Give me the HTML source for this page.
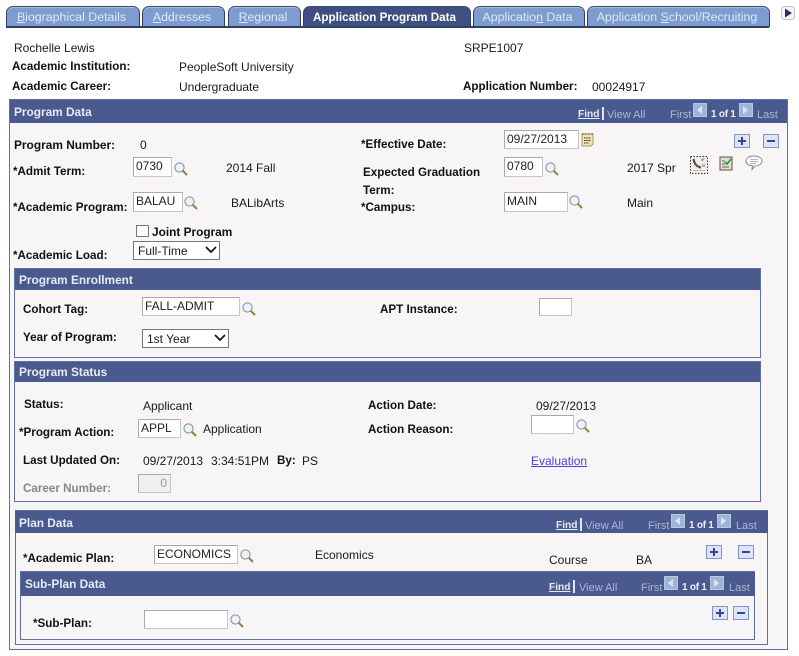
<!DOCTYPE html>
<html><head><meta charset="utf-8"><style>
html,body{margin:0;padding:0;background:#fff}
#p{position:relative;width:799px;height:656px;overflow:hidden;background:#fff;font:12px/14px "Liberation Sans",Arial,sans-serif;color:#1a1a1a;filter:blur(.3px)}
#p div,#p span.t,#p svg{position:absolute}
.t{white-space:nowrap}
.b{font-weight:bold;color:#111;font-size:11.65px;margin-top:1px}
.tab{top:6px;height:20px;background:#7d9dd0;border:1px solid #2f3f63;border-bottom:0;border-radius:7px 7px 0 0;border-top-color:#3a4a73;color:#dfe8f6;text-align:center;line-height:21px;box-shadow:inset 0 1px 0 #a9bfe2;white-space:nowrap;font-size:12.35px;text-indent:-3px}
.tab.a{background:#3f4f82;color:#fff;font-weight:bold;box-shadow:none;font-size:11.65px;text-indent:-5px}
.tab u{text-decoration-thickness:1px}
.box{border:1px solid #5f6ea3;box-sizing:border-box;background:#f7f5f5}
.hd{background:#4a5a8e;color:#e6ebf5;font-weight:bold}
.ht{color:#e6ebf5;font-weight:bold;font-size:11.85px}
.in{box-sizing:border-box;height:19px;background:#fff;border:1px solid #c9c6c2;border-top-color:#aaa;border-left-color:#aaa;line-height:14px;padding:1px 0 0 2px;color:#222;white-space:nowrap}
.sel{box-sizing:border-box;height:19px;background:#fff;border:1px solid #777;line-height:18px;padding-left:4px}
.nav{font-size:11px;color:#aab6d4}
.fd{font-size:10.2px;color:#e6ebf5;font-weight:bold}
.of{font-size:10px;color:#eef;font-weight:bold;letter-spacing:-.25px}
.pipe{width:2px;height:13px;background:#dfe5f2}
.nb{width:14px;height:14px;background:#9db5d8;border:1px solid #b4c6e0;box-sizing:border-box}
.nb:after{content:"";position:absolute;top:2px;border:4px solid transparent}
.nb.l:after{left:-1px;border-right:5px solid #dce6f3}
.nb.r:after{left:3px;border-left:5px solid #dce6f3}
.pm{width:16px;height:14px;box-sizing:border-box;background:#dde4f8;border:1px solid #7f92ca;color:#35468a}
.pm:before{content:"";position:absolute;left:3px;top:5px;width:8px;height:2px;background:#35468a}
.pm.p:after{content:"";position:absolute;left:6px;top:2px;width:2px;height:8px;background:#35468a}
</style></head><body><div id="p">
<svg width="0" height="0" style="position:absolute"><defs>
<symbol id="m" viewBox="0 0 14 14"><circle cx="5.5" cy="5.5" r="4.6" fill="#eaf2f8" stroke="#7f8f98" stroke-width="1"/><path d="M8.8 8.8L13 13" stroke="#8a8540" stroke-width="2"/></symbol>
</defs></svg>

<div class="tab" style="left:6px;width:132px"><u>B</u>iographical Details</div>
<div class="tab" style="left:142px;width:81px"><u>A</u>ddresses</div>
<div class="tab" style="left:228px;width:71px"><u>R</u>egional</div>
<div class="tab a" style="left:303px;width:166px">Application Program Data</div>
<div class="tab" style="left:473px;width:110px">Applicatio<u>n</u> Data</div>
<div class="tab" style="left:587px;width:181px">Application <u>S</u>chool/Recruiting</div>
<div style="left:6px;top:26px;width:763px;height:2px;background:#2f3f63"></div>
<svg style="left:781px;top:6px" width="15" height="15" viewBox="0 0 15 15"><rect x=".5" y=".5" width="13" height="13" rx="3" fill="#f4f5f8" stroke="#bfc4cf"/><path d="M4 2.500l7 4.500-7 4.500z" fill="#26324f"/></svg>

<span class="t" style="left:14px;top:41px">Rochelle Lewis</span>
<span class="t b" style="left:12px;top:59px">Academic Institution:</span>
<span class="t" style="left:179px;top:60px">PeopleSoft University</span>
<span class="t b" style="left:12px;top:79px">Academic Career:</span>
<span class="t" style="left:179px;top:80px">Undergraduate</span>
<span class="t" style="left:464px;top:41px">SRPE1007</span>
<span class="t b" style="left:463px;top:79px">Application Number:</span>
<span class="t" style="left:592px;top:80px">00024917</span>

<div class="box" style="left:9px;top:99px;width:779px;height:551px"></div>
<div class="hd" style="left:10px;top:100px;width:777px;height:23px"></div>
<span class="t ht" style="left:14px;top:105px">Program Data</span>
<span class="t fd" style="left:578px;top:108px"><u>Find</u></span>
<div class="pipe" style="left:602px;top:107px"></div>
<span class="t nav" style="left:607px;top:108px">View All</span>
<span class="t nav" style="left:670px;top:108px">First</span>
<div class="nb l" style="left:693px;top:103px"></div>
<span class="t of" style="left:711px;top:108px">1 of 1</span>
<div class="nb r" style="left:739px;top:103px"></div>
<span class="t nav" style="left:757px;top:108px">Last</span>

<span class="t b" style="left:14px;top:137px;font-size:11.9px">Program Number:</span>
<span class="t" style="left:140px;top:138px">0</span>
<span class="t b" style="left:13px;top:164px">*Admit Term:</span>
<div class="in" style="left:133px;top:157px;width:39px;height:20px">0730</div>
<svg style="left:174px;top:162px" width="14" height="14"><use href="#m"/></svg>
<span class="t" style="left:226px;top:161px">2014 Fall</span>
<span class="t b" style="left:13px;top:200px">*Academic Program:</span>
<div class="in" style="left:133px;top:192px;width:50px;height:20px">BALAU</div>
<svg style="left:184px;top:196px" width="14" height="14"><use href="#m"/></svg>
<span class="t" style="left:231px;top:196px">BALibArts</span>
<div style="left:136px;top:225px;width:13px;height:12px;box-sizing:border-box;border:1px solid #777;background:#fdfdfd"></div>
<span class="t b" style="left:152px;top:224px;font-size:11.85px">Joint Program</span>
<span class="t b" style="left:13px;top:248px">*Academic Load:</span>
<div class="sel" style="left:133px;top:241px;width:87px">Full-Time</div>
<svg style="left:205px;top:246px" width="12" height="9"><path d="M1 1l5 5 5-5" fill="none" stroke="#111" stroke-width="1.7"/></svg>

<span class="t b" style="left:361px;top:137px">*Effective Date:</span>
<div class="in" style="left:504px;top:130px;width:75px">09/27/2013</div>
<svg style="left:581px;top:132px" width="13" height="15" viewBox="0 0 13 15"><path d="M1 2h11v10l-2 2H1z" fill="#f1e4ad" stroke="#a89a63"/><path d="M2 1v2M5 1v2M8 1v2M11 1v2" stroke="#776"/><path d="M3 6h7M3 8.500h7M3 11h5" stroke="#333" stroke-dasharray="1.500 .7"/></svg>
<span class="t b" style="left:363px;top:165px">Expected Graduation</span>
<span class="t b" style="left:363px;top:183px">Term:</span>
<div class="in" style="left:504px;top:157px;width:39px;height:20px">0780</div>
<svg style="left:545px;top:162px" width="14" height="14"><use href="#m"/></svg>
<span class="t" style="left:627px;top:161px">2017 Spr</span>
<span class="t b" style="left:361px;top:200px">*Campus:</span>
<div class="in" style="left:504px;top:192px;width:64px;height:20px">MAIN</div>
<svg style="left:569px;top:195px" width="14" height="14"><use href="#m"/></svg>
<span class="t" style="left:627px;top:196px">Main</span>

<div class="pm p" style="left:734px;top:134px"></div>
<div class="pm" style="left:763px;top:134px"></div>
<svg style="left:690px;top:156px" width="18" height="18" viewBox="0 0 18 18"><rect x=".5" y=".5" width="17" height="17" fill="#f3efe6" stroke="#333" stroke-dasharray="1.500 1.500"/><path d="M3.500 3c1 5 3 7.500 7.500 8.500" fill="none" stroke="#555" stroke-width="2.200"/><path d="M11 3l4-1-3 4z" fill="#999"/><rect x="12" y="8" width="3" height="3" fill="#e9a0a0"/><path d="M3 14.500h12" stroke="#bbb"/></svg>
<svg style="left:719px;top:156px" width="14" height="15" viewBox="0 0 14 15"><rect x="1" y="1" width="12" height="13" fill="#e3dfc8" stroke="#55554a"/><path d="M3 5h3M3 8h3M3 11h7" stroke="#666"/><path d="M6 6l2 2 4-5" fill="none" stroke="#1f9a3c" stroke-width="1.600"/></svg>
<svg style="left:745px;top:155px" width="18" height="16" viewBox="0 0 18 16"><path d="M9 1c4.500 0 8 2 8 5s-3.500 5-7 5l-3 3.500.6-3.700C4 10.500 1 9 1 6c0-3 3.500-5 8-5z" fill="#fff" stroke="#888"/><path d="M5 4.500h8M5 6.500h8M5 8.500h6" stroke="#aab8dc"/></svg>

<div class="box" style="left:14px;top:268px;width:747px;height:90px"></div>
<div class="hd" style="left:15px;top:269px;width:745px;height:21px"></div>
<span class="t ht" style="left:19px;top:273px">Program Enrollment</span>
<span class="t b" style="left:23px;top:302px">Cohort Tag:</span>
<div class="in" style="left:142px;top:297px;width:98px">FALL-ADMIT</div>
<svg style="left:242px;top:302px" width="14" height="14"><use href="#m"/></svg>
<span class="t b" style="left:380px;top:302px">APT Instance:</span>
<div class="in" style="left:539px;top:298px;width:33px;height:18px"></div>
<span class="t b" style="left:23px;top:330px">Year of Program:</span>
<div class="sel" style="left:142px;top:329px;width:87px">1st Year</div>
<svg style="left:214px;top:334px" width="12" height="9"><path d="M1 1l5 5 5-5" fill="none" stroke="#111" stroke-width="1.7"/></svg>

<div class="box" style="left:14px;top:361px;width:747px;height:141px"></div>
<div class="hd" style="left:15px;top:362px;width:745px;height:20px"></div>
<span class="t ht" style="left:19px;top:365px">Program Status</span>
<span class="t b" style="left:24px;top:397px">Status:</span>
<span class="t" style="left:143px;top:399px">Applicant</span>
<span class="t b" style="left:19px;top:425px">*Program Action:</span>
<div class="in" style="left:138px;top:419px;width:43px">APPL</div>
<svg style="left:183px;top:423px" width="14" height="14"><use href="#m"/></svg>
<span class="t" style="left:203px;top:422px">Application</span>
<span class="t b" style="left:368px;top:398px">Action Date:</span>
<span class="t" style="left:536px;top:399px">09/27/2013</span>
<span class="t b" style="left:368px;top:422px">Action Reason:</span>
<div class="in" style="left:531px;top:415px;width:43px"></div>
<svg style="left:576px;top:419px" width="14" height="14"><use href="#m"/></svg>
<span class="t b" style="left:23px;top:453px">Last Updated On:</span>
<span class="t" style="left:143px;top:454px">09/27/2013</span>
<span class="t" style="left:211px;top:454px">3:34:51PM</span>
<span class="t b" style="left:277px;top:453px">By:</span>
<span class="t" style="left:302px;top:454px">PS</span>
<span class="t" style="left:531px;top:454px;color:#4f3fd8;text-decoration:underline">Evaluation</span>
<span class="t b" style="left:23px;top:481px;color:#888">Career Number:</span>
<div class="in" style="left:138px;top:474px;width:33px;background:#f0f0f0;color:#999;text-align:right;padding-right:3px">0</div>

<div class="box" style="left:15px;top:510px;width:753px;height:135px"></div>
<div class="hd" style="left:15px;top:511px;width:753px;height:22px"></div>
<span class="t ht" style="left:19px;top:516px">Plan Data</span>
<span class="t fd" style="left:556px;top:519px"><u>Find</u></span>
<div class="pipe" style="left:580px;top:518px"></div>
<span class="t nav" style="left:585px;top:519px">View All</span>
<span class="t nav" style="left:648px;top:519px">First</span>
<div class="nb l" style="left:671px;top:514px"></div>
<span class="t of" style="left:689px;top:519px">1 of 1</span>
<div class="nb r" style="left:717px;top:514px"></div>
<span class="t nav" style="left:736px;top:519px">Last</span>
<span class="t b" style="left:23px;top:551px">*Academic Plan:</span>
<div class="in" style="left:154px;top:545px;width:84px">ECONOMICS</div>
<svg style="left:240px;top:549px" width="14" height="14"><use href="#m"/></svg>
<span class="t" style="left:315px;top:548px">Economics</span>
<span class="t" style="left:549px;top:553px">Course</span>
<span class="t" style="left:636px;top:553px">BA</span>
<div class="pm p" style="left:706px;top:545px"></div>
<div class="pm" style="left:738px;top:545px"></div>

<div class="box" style="left:20px;top:571px;width:735px;height:69px"></div>
<div class="hd" style="left:21px;top:572px;width:734px;height:24px"></div>
<span class="t ht" style="left:25px;top:577px">Sub-Plan Data</span>
<span class="t fd" style="left:549px;top:581px"><u>Find</u></span>
<div class="pipe" style="left:573px;top:580px"></div>
<span class="t nav" style="left:579px;top:581px">View All</span>
<span class="t nav" style="left:641px;top:581px">First</span>
<div class="nb l" style="left:664px;top:576px"></div>
<span class="t of" style="left:682px;top:581px">1 of 1</span>
<div class="nb r" style="left:710px;top:576px"></div>
<span class="t nav" style="left:729px;top:581px">Last</span>
<span class="t b" style="left:33px;top:616px">*Sub-Plan:</span>
<div class="in" style="left:144px;top:610px;width:84px"></div>
<svg style="left:230px;top:614px" width="14" height="14"><use href="#m"/></svg>
<div class="pm p" style="left:712px;top:606px"></div>
<div class="pm" style="left:733px;top:606px"></div>
</div></body></html>
